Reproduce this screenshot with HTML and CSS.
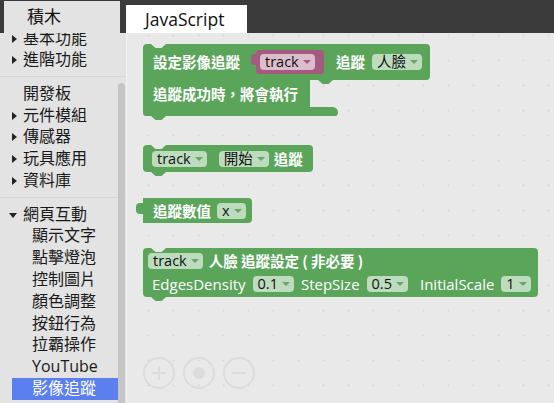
FILE: index.html
```html
<!DOCTYPE html>
<html lang="zh-Hant">
<head>
<meta charset="utf-8">
<title>積木</title>
<link rel="stylesheet" href="styles.css">
</head>
<body>
<div class="app">
  <header class="topbar">
    <div class="tab tab-blocks">積木</div>
    <div class="tab tab-js">JavaScript</div>
  </header>
  <div class="main">
    <aside class="toolbox">
      <ul class="cats">
        <li class="cat closed">基本功能</li>
        <li class="cat closed">進階功能</li>
        <li class="sep"></li>
        <li class="cat">開發板</li>
        <li class="cat closed">元件模組</li>
        <li class="cat closed">傳感器</li>
        <li class="cat closed">玩具應用</li>
        <li class="cat closed">資料庫</li>
        <li class="sep"></li>
        <li class="cat open">網頁互動</li>
        <li class="cat child">顯示文字</li>
        <li class="cat child">點擊燈泡</li>
        <li class="cat child">控制圖片</li>
        <li class="cat child">顏色調整</li>
        <li class="cat child">按鈕行為</li>
        <li class="cat child">拉霸操作</li>
        <li class="cat child">YouTube</li>
        <li class="cat child selected">影像追蹤</li>
      </ul>
      <div class="scroll-thumb"></div>
    </aside>
    <section class="workspace">
      <!-- block 1 -->
      <div class="block block-c b1">
        <div class="c-top notch">
          <span class="label">設定影像追蹤</span>
          <span class="value-block">
            <span class="field field-purple">track<i class="arrow"></i></span>
          </span>
          <span class="label l-gap">追蹤</span>
          <span class="field">人臉<i class="arrow"></i></span>
        </div>
        <div class="c-mid">
          <div class="c-mid-left"><span class="label">追蹤成功時，將會執行</span></div>
        </div>
        <div class="c-bot tab-bottom"></div>
      </div>

      <!-- block 2 -->
      <div class="block b2 notch tab-bottom">
        <span class="field">track<i class="arrow"></i></span>
        <span class="field f-wide">開始<i class="arrow"></i></span>
        <span class="label">追蹤</span>
      </div>

      <!-- block 3 -->
      <div class="block b3">
        <span class="out-tab"></span>
        <span class="label">追蹤數值</span>
        <span class="field">x<i class="arrow"></i></span>
      </div>

      <!-- block 4 -->
      <div class="block b4 notch tab-bottom">
        <div class="row">
          <span class="field">track<i class="arrow"></i></span>
          <span class="label">人臉 追蹤設定 ( 非必要 )</span>
        </div>
        <div class="row row2">
          <span class="text">EdgesDensity</span>
          <span class="field">0.1<i class="arrow"></i></span>
          <span class="text">StepSize</span>
          <span class="field">0.5<i class="arrow"></i></span>
          <span class="text t-gap">InitialScale</span>
          <span class="field">1<i class="arrow"></i></span>
        </div>
      </div>

      <div class="zoom-ctrls">
        <svg width="116" height="34" viewBox="0 0 116 34">
          <g fill="none" stroke="#dcdcdc" stroke-width="2">
            <circle cx="16" cy="16" r="15"/>
            <circle cx="56" cy="16" r="15"/>
            <circle cx="96" cy="16" r="15"/>
            <path d="M9 16h14M16 9v14M89 16h14"/>
          </g>
          <circle cx="56" cy="16" r="6" fill="#dcdcdc"/>
        </svg>
      </div>
    </section>
  </div>
</div>
</body>
</html>
```
FILE: styles.css
```css
* { box-sizing: border-box; }
html, body { margin: 0; padding: 0; }
body {
  width: 554px;
  height: 403px;
  overflow: hidden;
  background: #e9e9e9;
  font-family: "Open Sans", "Noto Sans CJK TC", sans-serif;
}
.app { display: flex; flex-direction: column; height: 403px; }

.topbar {
  height: 33px;
  background: #3b3b3b;
  display: flex;
  align-items: flex-end;
  flex: none;
}
.tab { height: 100%; }
.tab-blocks {
  margin-left: 4px;
  width: 116px;
  height: 32px;
  background: #e3e3e3;
  color: #111;
  font-size: 17px;
  line-height: 32px;
  padding-left: 23px;
}
.tab-js {
  margin-left: 6px;
  width: 121px;
  height: 28px;
  background: #fff;
  color: #111;
  font-size: 17.5px;
  line-height: 28px;
  padding-left: 19px;
}

.main { display: flex; flex: 1; min-height: 0; }

.toolbox {
  position: relative;
  width: 127px;
  flex: none;
  background: #e3e3e3;
  border-right: 1px solid #f2f2f2;
  overflow: hidden;
}
.cats {
  list-style: none;
  margin: -5.4px 0 0;
  padding: 0;
}
.cat {
  position: relative;
  height: 21.8px;
  line-height: 21.8px;
  font-size: 16px;
  color: #1a1a1a;
  padding-left: 23px;
  white-space: nowrap;
}
.cat.closed::before {
  content: "";
  position: absolute;
  left: 12px;
  top: 7px;
  border-left: 5px solid #222;
  border-top: 4px solid transparent;
  border-bottom: 4px solid transparent;
}
.cat.open::before {
  content: "";
  position: absolute;
  left: 9px;
  top: 9px;
  border-top: 5px solid #222;
  border-left: 4px solid transparent;
  border-right: 4px solid transparent;
}
.cat.child { padding-left: 32px; }
.cat.selected {
  margin-left: 12px;
  width: 106px;
  padding-left: 20px;
  background: #5b7fee;
  color: #fff;
}
.sep {
  height: 1px;
  margin: 5px 0 5.7px;
  background: #d6d6d6;
}
.scroll-thumb {
  position: absolute;
  right: 1px;
  top: 50px;
  bottom: -10px;
  width: 7px;
  border-radius: 4px;
  background: #c5c5c5;
}

.workspace {
  position: relative;
  flex: 1;
  overflow: hidden;
  background-color: #e9e9e9;
  background-image: radial-gradient(circle at 21.5px 2.5px, #dadada 0.8px, transparent 1.4px);
  background-size: 25px 25px;
}

/* blocks */
.block {
  position: absolute;
  color: #fff;
  font-size: 14.5px;
}
.label {
  font-family: "Noto Sans CJK TC", sans-serif;
  font-weight: 700;
  white-space: nowrap;
  line-height: 18px;
}
.text { white-space: nowrap; line-height: 18px; font-size: 15px; }

.field {
  display: inline-flex;
  align-items: center;
  height: 16px;
  padding: 0 4px 0 5px;
  border-radius: 4px;
  background: #bddbbd;
  color: #111;
  font-size: 14.5px;
  line-height: 16px;
  white-space: nowrap;
  font-family: "Open Sans", "Noto Sans CJK TC", sans-serif;
}
.arrow {
  display: inline-block;
  margin-left: 4px;
  border-top: 4px solid #6aa46a;
  border-left: 4px solid transparent;
  border-right: 4px solid transparent;
}
.field-purple { background: #dbbdcc; }
.field-purple .arrow { border-top-color: #a55b80; }

.notch::before {
  content: "";
  position: absolute;
  top: 0;
  left: 8px;
  width: 15px;
  height: 4px;
  background: #e9e9e9;
  clip-path: polygon(0 0, 100% 0, 70% 100%, 30% 100%);
}
.tab-bottom::after {
  content: "";
  position: absolute;
  bottom: -4px;
  left: 8px;
  width: 15px;
  height: 4px;
  background: #5ba55b;
  clip-path: polygon(0 0, 100% 0, 70% 100%, 30% 100%);
}

/* block 1: statement (C-shape) */
.b1 { left: 16px; top: 11px; }
.c-top {
  position: relative;
  width: 287px;
  height: 36px;
  background: #5ba55b;
  border-radius: 4px 4px 4px 0;
  display: flex;
  align-items: center;
  padding-left: 10px;
}
.c-top::after {
  content: "";
  position: absolute;
  bottom: -4px;
  left: 175px;
  width: 15px;
  height: 4px;
  background: #5ba55b;
  clip-path: polygon(0 0, 100% 0, 70% 100%, 30% 100%);
}
.value-block {
  position: relative;
  margin-left: 16px;
  height: 24px;
  width: 68px;
  background: #a55b80;
  border-radius: 3px;
  display: flex;
  align-items: center;
  padding-left: 4px;
}
.value-block::before {
  content: "";
  position: absolute;
  left: -5px;
  top: 4px;
  width: 6px;
  height: 11px;
  background: #a55b80;
  border-radius: 3px 0 0 3px;
}
.l-gap { margin-left: 12px; margin-right: 7px; }
.c-mid { display: flex; }
.c-mid-left {
  width: 167px;
  height: 27px;
  background: #5ba55b;
  display: flex;
  align-items: center;
  padding-left: 10px;
}
.c-bot {
  position: relative;
  width: 195px;
  height: 9px;
  background: #5ba55b;
  border-radius: 0 6px 4px 4px;
}

/* block 2 */
.b2 {
  left: 16px;
  top: 112px;
  width: 170px;
  height: 27px;
  background: #5ba55b;
  border-radius: 4px;
  display: flex;
  align-items: center;
  padding-left: 9px;
  gap: 5px;
}
.f-wide { margin-left: 7px; }

/* block 3 */
.b3 {
  left: 16px;
  top: 165px;
  width: 109px;
  height: 25px;
  background: #5ba55b;
  border-radius: 0 4px 4px 0;
  display: flex;
  align-items: center;
  padding-left: 10px;
  gap: 6px;
}
.out-tab {
  position: absolute;
  left: -7px;
  top: 5px;
  width: 8px;
  height: 11px;
  background: #5ba55b;
  border-radius: 4px 0 0 4px;
}

/* block 4 */
.b4 {
  left: 16px;
  top: 215px;
  width: 395px;
  height: 49px;
  background: #5ba55b;
  border-radius: 4px;
  display: flex;
  flex-direction: column;
  justify-content: center;
  gap: 5px;
  padding: 0 6px 0 5px;
}
.b4 .row {
  display: flex;
  align-items: center;
  gap: 6px;
}
.b4 .row2 { padding-left: 4px; gap: 7px; }
.t-gap { margin-left: 5px; }

.zoom-ctrls {
  position: absolute;
  left: 16px;
  top: 324px;
  line-height: 0;
}
```
